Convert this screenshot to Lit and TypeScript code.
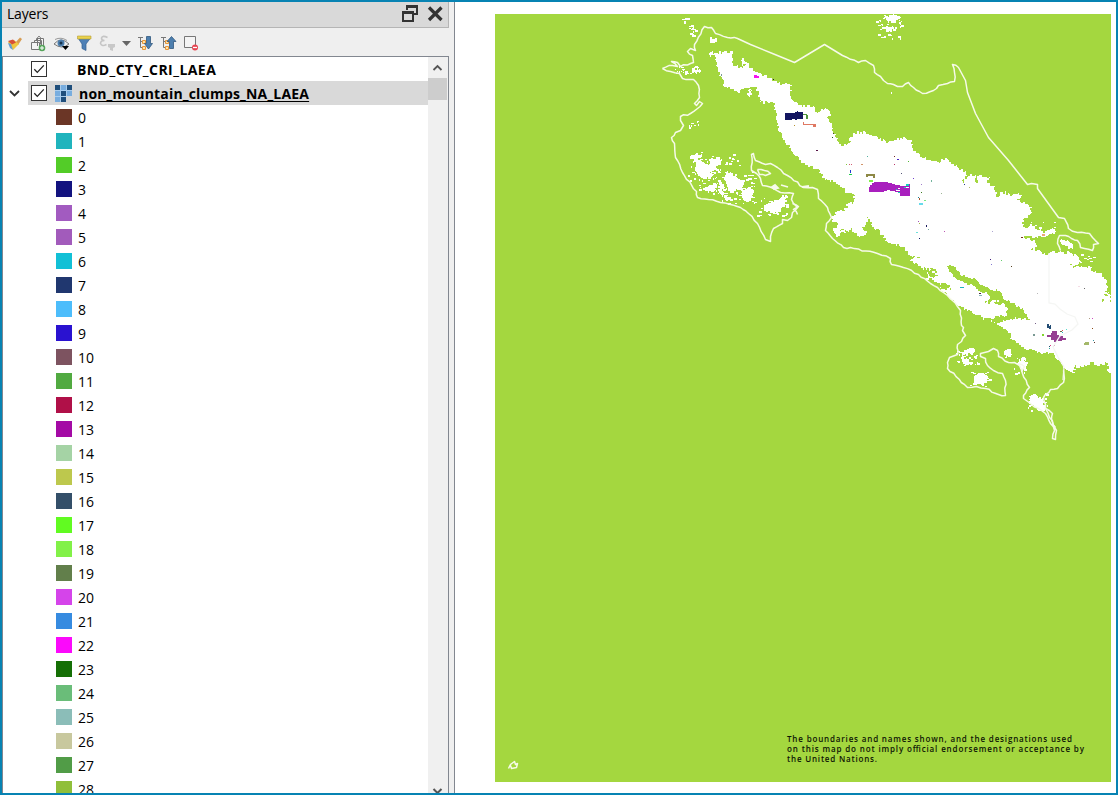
import { LitElement, html, svg, css } from "lit";
import { customElement } from "lit/decorators.js";

const CLASSES = [
  "#6b3626", "#20b4bd", "#53cc28", "#13137f", "#a25bc0", "#a25bbb", "#12c0d6", "#20376f",
  "#4dbdfb", "#2a12d0", "#7d5360", "#51aa41", "#b01048", "#a40aa5", "#a5d3a5", "#bdc84d",
  "#344f69", "#61fb21", "#82f148", "#627f4b", "#d544ea", "#368be0", "#fb09fb", "#156f05",
  "#6abd79", "#8bbdb8", "#c8c89e", "#519c47", "#90bf3a",
];

const MAINLAND =
  "710,52 716,53 733,51 733,66 740,67 747,66 742,64 742,58 747,63 751,68 753,71 758,73 770,78 777,83 790,85 791,99 800,105 813,106 815,112 820,111 825,108 832,114 827,118 832,128 838,142 843,146 848,143 853,133 865,132 878,139 888,142 905,138 912,142 912,148 922,158 937,162 947,159 957,167 966,173 963,183 968,176 975,175 976,183 979,175 985,177 990,177 987,183 995,187 996,197 1002,192 1012,195 1018,193 1022,196 1017,200 1030,205 1032,213 1023,220 1023,227 1029,226 1035,225 1037,230 1045,233 1053,227 1056,232 1049,235 1043,237 1022,237 1033,240 1037,247 1030,248 1040,251 1045,255 1050,252 1058,252 1070,253 1078,257 1082,263 1068,266 1090,267 1093,272 1100,273 1104,279 1107,283 1107,291 1102,302 1109,292 1111,303 1112,303 1112,372 1108,372 1108,363 1097,365 1092,362 1087,366 1075,367 1074,375 1068,370 1063,368 1060,361 1055,355 1040,352 1027,350 1013,340 1007,330 997,323 977,315 958,305 950,297 940,287 950,290 950,285 935,282 925,273 937,275 938,270 921,268 910,260 920,257 910,255 903,247 888,242 880,232 872,225 868,217 866,225 860,228 867,233 862,236 857,235 852,228 845,232 841,228 838,237 833,230 838,223 832,220 835,212 845,210 848,203 853,202 855,195 847,193 842,187 830,180 823,178 820,170 803,163 793,152 783,138 778,128 777,113 773,102 760,102 757,87 750,88 738,92 725,87 720,73 716,65 716,57 710,56";

const VALLEYS = [
  "947,266 954,265 960,275 973,278 980,285 1000,292 1003,299 1012,303 1023,310 1030,320 1019,318 1007,320 998,323 983,319 1005,316 1008,308 1001,302 997,300 983,304 991,299 988,294 978,289 970,285 958,280 952,273",
  "930,268 937,270 938,275 933,279 929,275",
  "995,299 999,302 1004,304 1001,305 995,303",
];

const PATCHES = [
  "690,156 703,153 698,160 708,165 711,158 720,158 721,165 712,170 710,177 702,180 695,170 696,162",
  "705,188 718,183 714,192 703,191",
  "719,182 723,183 723,197 720,193",
  "725,172 731,173 740,180 745,182 739,190 729,193 727,184 723,180",
  "741,188 745,191 750,186 754,193 749,202 744,200 740,194",
  "763,206 770,203 777,200 781,197 787,196 785,205 778,213 771,213 764,211",
  "724,195 733,199 733,201 725,199",
  "962,354 966,350 971,348 975,352 973,355 966,354",
  "960,357 966,358 973,364 966,366",
  "973,378 978,373 986,373 989,379 984,385 975,384",
  "1005,350 1011,350 1011,357 1005,357",
  "1018,364 1022,357 1028,364 1026,368 1021,370",
  "1029,396 1036,395 1043,400 1046,409 1041,411 1034,405 1029,403",
  "1059,240 1068,241 1075,246 1073,249 1062,244",
  "883,16 891,15 900,17 894,23 888,21",
  "885,27 893,26 892,32 888,31",
  "710,37 714,39 720,38 717,42 712,43",
  "748,90 752,90 750,97 748,95",
  "692,68 700,69 700,73 695,72",
];

const COAST = [
  "662,68 672,65 677,66 671,61 677,62 680,66 690,63 693,62 692,55 687,51 690,48 695,50 694,44 704,26 711,27 715,33 727,37 737,38 750,44 772,53 794,62 824,44 842,55 858,62 865,60 873,65 874,72 880,76 883,80 887,83 893,84 897,86 902,86 908,82 913,87 922,93 933,90 938,85 947,83 954,81 954,72 952,64 958,67 965,80 967,92 975,113 988,137 1008,160 1027,184 1031,183 1037,184 1037,188 1058,217 1064,218 1068,228 1077,232 1089,233 1092,237 1098,243 1093,244 1092,250 1080,247 1077,240 1071,238 1065,235 1059,235 1057,243 1060,250",
  "1063,370 1063,382 1057,388 1050,389 1043,397 1045,408 1052,413 1051,419 1053,425 1056,430 1055,439 1052,438 1054,430 1045,413 1038,408 1030,403 1023,398 1023,395 1029,387 1022,373 1019,365 1014,362 1008,362 998,356 997,350 993,348 988,351 980,353 980,356 985,358 987,365 993,370 1002,373 1005,380 1005,395 998,394 985,388 976,386 967,387 947,368 947,362 949,357 957,354 957,344 961,341 965,335 962,330 963,327 961,325 960,310 957,306 947,295 937,287 930,283 918,274 903,267 891,264 890,258 877,253 850,247 843,247 832,238 825,230 826,223 831,217 827,207 818,198 817,189 812,187 803,187 787,175 777,167 770,163 765,164 755,160 753,153 751,154 751,170 756,173 760,178 762,185 773,188 780,192 793,193 791,199 793,203 797,207 792,212 791,217 787,220 782,219 782,223 773,228 770,236 770,241 765,239 757,223 748,213 740,207 720,202 708,199 697,197 696,191 682,172 675,157 674,143 671,137 675,132 680,130 683,125 680,120 680,116 690,113 702,103 699,101 696,105 694,103 699,97 698,85 693,79 682,78 679,73 670,71 662,68",
  "757,169 764,170 770,173 765,175 759,174 757,169",
  "1045,408 1049,417 1055,427",
  "1018,363 1024,366 1021,371",
  "508,768 510,764 514,761 515,764 517,763 516,767 511,768 510,765",
  "792,203 798,206 793,209 797,214",
];

const FRONTIER = "1049,253 1049,303 1055,304 1060,309 1067,314 1075,317 1078,324 1072,330 1060,336 1053,347 1058,357 1064,367 1063,380";

type Speck = [number, number, number, number, string];
const SPECKS: Speck[] = [
  [754, 75, 3, 3, "#f514ef"], [757, 76, 2, 2, "#f514ef"], [721, 74, 1, 2, "#7b9d92"], [773, 79, 1, 1, "#29203d"],
  [803, 114, 4, 1, "#51973d"], [806, 115, 2, 4, "#51973d"],
  [803, 122, 1, 3, "#df7862"], [804, 124, 12, 1, "#df7862"], [813, 125, 3, 2, "#df7862"],
  [794, 125, 1, 1, "#b5912e"], [833, 133, 1, 1, "#444a2c"], [832, 137, 1, 1, "#255a28"], [816, 150, 2, 1, "#581447"],
  [867, 156, 1, 1, "#54b1a0"], [894, 156, 1, 1, "#722828"], [897, 159, 2, 1, "#4b27c4"], [908, 161, 1, 1, "#52b836"],
  [846, 164, 1, 1, "#83ca3d"], [849, 164, 1, 1, "#d35d74"], [851, 164, 1, 1, "#d35d74"], [861, 164, 2, 1, "#d29469"],
  [894, 164, 1, 1, "#b93468"], [850, 170, 1, 3, "#203bd0"], [849, 174, 3, 1, "#20ce4b"], [901, 173, 1, 1, "#575777"],
  [866, 174, 9, 2, "#8d8845"], [866, 176, 2, 1, "#8d8845"], [873, 176, 2, 2, "#8d8845"], [869, 180, 4, 2, "#82f148"],
  [913, 178, 1, 1, "#7040ce"], [931, 180, 1, 2, "#72b49d"], [921, 184, 1, 1, "#a07dcb"], [941, 193, 1, 1, "#9eb596"],
  [921, 192, 1, 1, "#3c7c21"], [919, 198, 1, 2, "#a2532f"], [918, 197, 1, 1, "#188097"], [924, 200, 2, 1, "#78ec86"],
  [919, 203, 4, 2, "#67daeb"], [918, 221, 1, 1, "#a150b6"], [919, 223, 1, 1, "#a4b24a"], [926, 225, 1, 2, "#191b5d"],
  [928, 229, 1, 1, "#78ada4"], [916, 232, 2, 1, "#6be0db"], [919, 238, 1, 1, "#181866"], [944, 231, 1, 1, "#ba55b2"],
  [964, 184, 1, 1, "#243b8d"], [969, 187, 1, 1, "#b4bc71"], [992, 231, 1, 1, "#aca5d1"],
  [990, 259, 1, 1, "#43217b"], [991, 264, 1, 1, "#8278d1"], [1001, 260, 1, 1, "#64ce6b"], [1011, 266, 1, 1, "#574322"],
  [960, 287, 4, 1, "#20b4bd"], [979, 293, 2, 1, "#43283e"], [979, 295, 3, 1, "#84b6b8"], [1037, 293, 1, 1, "#b9b8b9"],
  [1035, 323, 1, 1, "#755f88"], [1033, 334, 2, 2, "#7a9993"], [1042, 334, 2, 2, "#82d52e"],
  [1047, 324, 2, 4, "#234c73"], [1049, 326, 2, 3, "#234c73"], [1050, 325, 1, 1, "#234c73"],
  [1089, 318, 1, 1, "#ad9b83"], [1092, 318, 1, 1, "#cf4bbf"], [1092, 328, 1, 1, "#8b4b18"], [1093, 340, 1, 1, "#3694a4"],
  [1094, 342, 1, 1, "#563022"], [1085, 342, 4, 3, "#a4b86a"], [1084, 343, 3, 2, "#a4b86a"],
  [1060, 331, 2, 1, "#5d7449"], [1062, 332, 1, 1, "#20b4bd"], [1066, 329, 1, 1, "#5addca"], [1062, 330, 1, 1, "#d3514f"],
  [1049, 346, 1, 1, "#234c73"], [1050, 345, 1, 1, "#d83f83"], [1053, 346, 1, 1, "#b33c73"], [1049, 348, 1, 1, "#32ad9f"],
  [1054, 345, 1, 1, "#a4386f"], [1078, 286, 2, 1, "#f3dce5"], [1084, 288, 1, 1, "#676767"], [1042, 234, 3, 2, "#eda778"],
  [1021, 237, 2, 1, "#7b2f1c"],
];

const SPRINKLES: [number, number, number, number, number][] = [
  [682, 18, 6, 5, 7], [689, 24, 8, 12, 14], [675, 66, 24, 8, 20], [689, 121, 10, 8, 8], [706, 168, 15, 13, 18],
  [688, 155, 34, 26, 35], [722, 172, 34, 32, 46], [757, 198, 30, 19, 30], [699, 183, 26, 11, 24],
  [725, 154, 16, 12, 12], [876, 17, 26, 22, 36], [890, 91, 2, 2, 1], [833, 211, 25, 22, 22],
  [956, 348, 22, 17, 22], [970, 372, 20, 15, 20], [1014, 358, 13, 16, 22], [1026, 393, 23, 18, 28],
  [1010, 222, 45, 14, 14], [924, 265, 16, 14, 12], [1072, 254, 22, 10, 10],
];

function noise(seed: number) {
  let s = seed;
  return () => {
    s = (s * 1664525 + 1013904223) >>> 0;
    return s / 4294967296;
  };
}

/** Steps a polygon's edges onto whole map cells, with a small ragged offset. */
function ragged(points: string, amp: number, seed = 7) {
  const rnd = noise(seed);
  const p = points.split(" ").map((q) => q.split(",").map(Number));
  let d = "";
  p.forEach(([x, y], i) => {
    const [nx, ny] = p[(i + 1) % p.length];
    const len = Math.hypot(nx - x, ny - y);
    const steps = Math.max(1, Math.round(len / 1.6));
    const straight = x > 1110 && nx > 1110;
    for (let k = 0; k < steps; k++) {
      const t = k / steps;
      const o = k && !straight ? (rnd() - 0.5) * 2 * amp : 0;
      const cx = Math.round(x + (nx - x) * t - ((ny - y) / (len || 1)) * o);
      const cy = Math.round(y + (ny - y) * t + ((nx - x) / (len || 1)) * o);
      d += d ? `H${cx}V${cy}` : `M${cx} ${cy}`;
    }
  });
  return d + "Z";
}

/** Adds small kinks to the long segments of a shoreline. */
function shoreline(points: string, amp: number) {
  const rnd = noise(19);
  const p = points.split(" ").map((q) => q.split(",").map(Number));
  const out: string[] = [];
  p.forEach(([x, y], i) => {
    out.push(`${x + 0.5},${y + 0.5}`);
    if (i === p.length - 1) return;
    const [nx, ny] = p[i + 1];
    const len = Math.hypot(nx - x, ny - y);
    const smooth = (x > 956 && y < 218 && nx > 956) || (x > 730 && x < 842 && y < 63);
    const steps = Math.round(len / 4);
    for (let k = 1; k < steps && !smooth; k++) {
      const o = (rnd() - 0.5) * 2 * amp;
      const t = k / steps;
      out.push(`${(x + (nx - x) * t - ((ny - y) / len) * o + 0.5).toFixed(1)},${(y + (ny - y) * t + ((nx - x) / len) * o + 0.5).toFixed(1)}`);
    }
  });
  return out.join(" ");
}

function sprinkle() {
  const rnd = noise(41);
  let d = "";
  for (const [x, y, w, h, n] of SPRINKLES) {
    for (let i = 0; i < n; i++) {
      const cw = 1 + Math.floor(rnd() * 3);
      const ch = 1 + Math.floor(rnd() * 2);
      d += `M${x + Math.floor(rnd() * w)} ${y + Math.floor(rnd() * h)}h${cw}v${ch}h${-cw}z`;
    }
  }
  return d;
}

@customElement("map-canvas")
class MapCanvas extends LitElement {
  static styles = css`
    :host { display: block; }
    .map { display: block; background: #a4d73f; }
    .note { font: 600 8px "Open Sans", sans-serif; fill: #0d1405; }
  `;
  render() {
    return html`
      <svg class="map" width="616" height="768" viewBox="495 14 616 768">
        <g shape-rendering="crispEdges">
          <path fill="#fff" d=${ragged(MAINLAND, 1.6)} />
          ${VALLEYS.map((v, i) => svg`<path fill="#a4d73f" d=${ragged(v, 1.4, i + 3)} />`)}
          ${PATCHES.map((v, i) => svg`<path fill="#fff" d=${ragged(v, 1.6, i + 11)} />`)}
          <path fill="#fff" d=${sprinkle()} />
          <path fill="#131560" d="M785 113H795V112H797V111H798V112H803V119H797V120H795V119H792V120H785Z" />
          <path fill="#a91fbe" d="M870 185H872V183H874V182H888V183H892V184H895V185H900V186H909V184H910V196H900V192H895V191H890V190H887V191H884V192H869V187H870Z" />
          <path fill="#fff" d="M896 190h4v1h-4zM898 188h2v1h-2zM905 187h4v1h-4z" />
          <path fill="#12d5bd" d="M906 184h3v2h-3zM904 187h2v1h-2zM896 189h1v1h-1zM898 192h2v1h-2z" />
          <path fill="#953e91" d="M1052 331H1057V335H1059V336H1063V338H1066V340H1062V341H1058V339H1057V342H1054V340H1051V337H1047V335H1051V333H1052Z" />
          ${SPECKS.map(([x, y, w, h, c]) => svg`<rect x=${x} y=${y} width=${w} height=${h} fill=${c} />`)}
        </g>
        <polyline points=${FRONTIER} fill="none" stroke="#f5f6f4" stroke-width="1.3" />
        ${COAST.map((c) => svg`<polyline points=${shoreline(c, 0.9)} fill="none" stroke="#f6fae9" stroke-width="1.5" stroke-linejoin="round" />`)}
        <path d="M772 187l3-2 3 3-4 1zM781 185l7 2M802 187l7-1" stroke="#f6fae9" stroke-width="1.8" fill="#f6fae9" />
        <g class="note">
          <text x="787" y="742" textLength="285">The boundaries and names shown, and the designations used</text>
          <text x="787" y="752" textLength="297">on this map do not imply official endorsement or acceptance by</text>
          <text x="787" y="762" textLength="90">the United Nations.</text>
        </g>
      </svg>
    `;
  }
}

@customElement("layers-panel")
class LayersPanel extends LitElement {
  static styles = css`
    :host {
      display: flex; flex-direction: column; width: 453px; box-sizing: border-box; padding-right: 5px;
      background: #efefef; border-right: 1px solid #828790; min-height: 0; overflow: hidden;
      font: 14px/24px "Open Sans", sans-serif; color: #000;
    }
    svg { display: block; }
    .title {
      display: flex; align-items: center; height: 26px; flex: none; box-sizing: border-box; background: #d9d9d9;
      border-right: 1px solid #b5b5b5; border-bottom: 1px solid #b5b5b5; padding: 0 4px 2px 5px;
    }
    .title span { flex: 1; letter-spacing: -0.2px; }
    .tools { height: 28px; flex: none; }
    .tree { flex: 1; min-height: 0; display: flex; border: 1px solid #828790; border-bottom: 0; background: #fff; overflow: hidden; width: 447px; box-sizing: border-box; }
    .rows { flex: 1; min-width: 0; }
    .row { display: flex; align-items: center; height: 24px; }
    .arrow { width: 25px; flex: none; }
    .body { flex: 1; display: flex; align-items: center; height: 24px; padding-left: 3px; }
    .selected { background: #d9d9d9; }
    .name { font-weight: 700; white-space: nowrap; margin-top: 1px; }
    .name.vector { margin-left: 30px; letter-spacing: 0.45px; }
    .name.raster {
      margin-left: 7px; letter-spacing: 0.18px; text-decoration: underline 1px;
      text-underline-offset: 2px; text-decoration-skip-ink: none;
    }
    .thumb { margin-left: 8px; }
    .class { display: flex; align-items: center; height: 24px; padding-left: 53px; gap: 6px; }
    .class span { margin-top: 2px; }
    .swatch { width: 16px; height: 16px; }
    .scroll { width: 20px; flex: none; background: #f0f0f0; display: flex; flex-direction: column; }
    .handle { width: 19px; height: 22px; background: #cdcdcd; }
    .spacer { flex: 1; }
  `;
  private check() {
    return html`<svg width="16" height="16" viewBox="0 0 16 16"><rect x=".5" y=".5" width="15" height="15" fill="#fff" stroke="#333" /><path d="M3.3 8.2l3 3.2 6.5-7" fill="none" stroke="#222" stroke-width="1.3" /></svg>`;
  }
  render() {
    return html`
      <div class="title">
        <span>Layers</span>
        <svg width="42" height="22" viewBox="0 0 42 22" fill="none" stroke="#333" stroke-width="2">
          <path d="M5 7V3h10v8h-3" /><path d="M4 2h12v3H4z" fill="#333" stroke="none" />
          <path d="M1 10h10v8H1z" /><path d="M0 8h12v3H0z" fill="#333" stroke="none" />
          <path d="M27 4.500l12.500 12.500M39.500 4.500L27 17" stroke-width="3.200" />
        </svg>
      </div>
      <svg class="tools" width="220" height="28" viewBox="2 28 220 28">
        <path d="M15 43l5-5.500 2 1.500-4 6z" fill="#d79c52" /><path d="M8 42l6-2 5 4-6 6z" fill="#efc640" /><path d="M8 41l5-1.500 3 3-4 2z" fill="#d74f39" /><path d="M8 43l3 1 2 6-3-2z" fill="#679cd0" />
        <g fill="#f4f4f4" stroke="#777"><path d="M36.500 38.500h7v8h-7z" /><path d="M34.500 40.500h7v8h-7z" /><path d="M31.500 42.500h8v7h-8z" /><path d="M37.500 46v-8.500q1.500-2.500 3 0v7" fill="none" /></g>
        <circle cx="42" cy="48" r="3.300" fill="#55a45b" /><path d="M40 48h4M42 46v4" stroke="#fff" />
        <path d="M54 44q7-8 15 0q-7 6-15 0z" fill="#eee" stroke="#777" /><path d="M55 39.500q6-3 12 1" fill="none" stroke="#999" /><circle cx="61" cy="43" r="3.500" fill="#4e7fad" /><circle cx="61" cy="43" r="1.500" fill="#17334e" /><path d="M62 46h7l-3.500 4z" fill="#000" />
        <path d="M78 38h12.500l-4.500 6v6.500l-4-2V44z" fill="#4e80b6" stroke="#345f90" stroke-width=".7" /><path d="M77.500 36h13.500v3H77.500z" fill="#e9d34e" stroke="#b59b35" stroke-width=".6" />
        <path d="M107.500 37.500q-5-2.500-6 .5q0 2.500 3 2.500q-4 0-4 3q1.500 3.500 6 1" fill="none" stroke="#c5c5c5" stroke-width="1.600" /><path d="M108 44h7v3l-2 1v3l-3-1v-2l-2-1z" fill="#c8c8c8" /><path d="M122 41h9l-4.500 5z" fill="#666" />
        <g fill="none" stroke="#777"><path d="M138 37.500h5M140.500 38v9.500h3M140.500 41.500h3" /><path d="M161 37.500h5M163.500 38v9.500h3M163.500 41.500h3" /></g>
        <g fill="#ffe2a8" stroke="#e6963a"><path d="M142.500 40.500h3v3h-3zM142.500 46.500h3v3h-3zM165.500 40.500h3v3h-3zM165.500 46.500h3v3h-3z" /></g>
        <path d="M146.500 36.500h4v7h2l-4 5.500-4-5.500h2z" fill="#4c7eae" stroke="#31587e" stroke-width=".8" /><path d="M169.500 48.500h4v-7h2.500l-4.500-5-4.500 5h2.500z" fill="#4c7eae" stroke="#31587e" stroke-width=".8" />
        <path d="M184.500 36.500h11v11h-11z" fill="#f4f4f4" stroke="#777" /><circle cx="195" cy="47.500" r="3" fill="#e64450" /><path d="M193 47.500h4" stroke="#fff" stroke-width="1.300" />
      </svg>
      <div class="tree">
        <div class="rows">
          <div class="row">
            <div class="arrow"></div>
            <div class="body">${this.check()}<span class="name vector">BND_CTY_CRI_LAEA</span></div>
          </div>
          <div class="row">
            <svg class="arrow" width="25" height="24" viewBox="0 0 25 24"><path d="M7 10l4.500 4.500L16 10" fill="none" stroke="#333" stroke-width="1.800" /></svg>
            <div class="body selected">
              ${this.check()}
              <svg class="thumb" width="17" height="17" viewBox="0 0 17 17" shape-rendering="crispEdges">
                <path fill="#a9cdee" d="M0 0h17v11h-6v6H0z" />
                <path fill="#78addf" d="M6 0h5v5H6zM0 6h5v5H0zM12 6h5v5h-5zM6 12h5v5H6z" />
                <path fill="#204f7c" d="M0 0h5v5H0zM12 0h5v5h-5zM6 6h5v5H6zM0 12h5v5H0z" />
                <path fill="#78addf" d="M0 12h5v5H0z" /><path fill="#204f7c" d="M6 12h5v5H6z" />
              </svg>
              <span class="name raster">non_mountain_clumps_NA_LAEA</span>
            </div>
          </div>
          ${CLASSES.map((c, i) => html`<div class="class"><div class="swatch" style="background:${c}"></div><span>${i}</span></div>`)}
        </div>
        <div class="scroll">
          <svg width="19" height="21" viewBox="0 0 19 21"><path d="M5.500 13L9.500 9l4 4" fill="none" stroke="#555" stroke-width="1.800" /></svg>
          <div class="handle"></div>
          <div class="spacer"></div>
          <svg width="19" height="5" viewBox="0 0 19 5"><path d="M5.500 1L9.500 5l4-4" fill="none" stroke="#555" stroke-width="2" /></svg>
        </div>
      </div>
    `;
  }
}

@customElement("app-root")
class AppRoot extends LitElement {
  static styles = css`
    :host { display: flex; box-sizing: border-box; width: 1118px; height: 795px; border: 2px solid #0783b3; background: #fff; overflow: hidden; }
    .view { padding: 12px 0 0 40px; }
  `;
  render() {
    return html`<layers-panel></layers-panel><map-canvas class="view"></map-canvas>`;
  }
}
